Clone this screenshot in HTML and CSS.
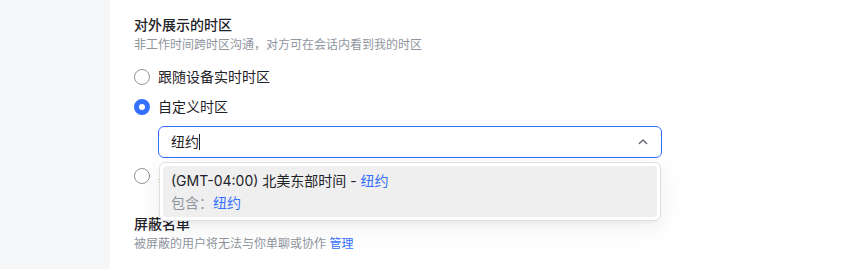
FILE: index.html
```html
<!DOCTYPE html>
<html lang="zh">
<head>
<meta charset="utf-8">
<link rel="stylesheet" href="styles.css">
</head>
<body>
<div class="page">
  <aside class="sidebar"></aside>
  <main class="main">
    <section class="section">
      <div class="title">对外展示的时区</div>
      <div class="desc">非工作时间跨时区沟通，对方可在会话内看到我的时区</div>
      <div class="options">
        <div class="radio-row"><span class="radio"></span><span class="label">跟随设备实时时区</span></div>
        <div class="radio-row"><span class="radio checked"></span><span class="label">自定义时区</span></div>
        <div class="select-wrap">
          <div class="select">
            <span class="value">纽约</span><span class="caret"></span>
            <svg class="chevron" width="12" height="12" viewBox="0 0 12 12"><path d="M2.3 7.6 6 3.9l3.7 3.7" fill="none" stroke="#646a73" stroke-width="1.4" stroke-linecap="round" stroke-linejoin="round"/></svg>
          </div>
          <div class="dropdown">
            <div class="option">
              <div class="opt-main">(GMT-04:00) 北美东部时间 - <span class="hl">纽约</span></div>
              <div class="opt-sub">包含：<span class="hl">纽约</span></div>
            </div>
          </div>
        </div>
        <div class="radio-row"><span class="radio"></span><span class="label">其他时区</span></div>
      </div>
    </section>
    <section class="section second">
      <div class="title">屏蔽名单</div>
      <div class="desc">被屏蔽的用户将无法与你单聊或协作 <a class="link">管理</a></div>
    </section>
  </main>
</div>
</body>
</html>
```
FILE: styles.css
```css
* { box-sizing: border-box; }
html, body { margin: 0; padding: 0; }
body {
  font-family: Inter, "Noto Sans CJK SC", sans-serif;
  color: #1f2329;
  background: #fff;
  width: 841px;
  height: 269px;
  overflow: hidden;
}
.page { display: flex; height: 269px; }
.sidebar { width: 110px; flex: none; background: #f5f6f7; }
.main { flex: 1; padding: 15px 0 0 24px; }
.section { display: flex; flex-direction: column; }
.title { font-size: 14px; line-height: 20px; font-weight: 500; color: #1f2329; }
.desc { font-size: 12px; line-height: 20px; color: #8f959e; }
.link { color: #3370ff; }
.options { display: flex; flex-direction: column; margin-top: 11px; }
.radio-row { display: flex; align-items: center; height: 22px; gap: 8px; margin-bottom: 8px; }
.radio {
  width: 16px; height: 16px; border-radius: 50%;
  border: 1px solid #8f959e; background: #fff; flex: none;
}
.radio.checked { border: 5px solid #3370ff; }
.label { font-size: 14px; line-height: 22px; color: #1f2329; }
.select-wrap { position: relative; margin-left: 24px; width: 504px; margin-bottom: 7px; }
.select {
  height: 32px; border: 1px solid #3370ff; border-radius: 6px;
  display: flex; align-items: center; padding: 0 12px 0 12px;
  font-size: 14px; background: #fff;
}
.value { line-height: 22px; }
.caret { width: 1px; height: 16px; background: #1f2329; }
.chevron { margin-left: auto; }
.dropdown {
  position: absolute; left: 1px; right: 1px; top: 36px; z-index: 2;
  background: #fff; border: 1px solid #dee0e3; border-radius: 6px;
  padding: 3px;
  box-shadow: 0 6px 24px rgba(31,35,41,0.08), 0 3px 6px -4px rgba(31,35,41,0.12);
}
.option { background: #efefef; border-radius: 4px; padding: 4px 8px 3px; }
.opt-main { font-size: 14px; line-height: 22px; color: #1f2329; }
.opt-sub { font-size: 14px; line-height: 22px; color: #8f959e; }
.hl { color: #3370ff; }
.second { margin-top: 19px; }
```
